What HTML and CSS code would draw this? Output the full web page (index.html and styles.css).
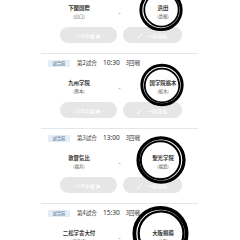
FILE: index.html
```html
<!DOCTYPE html>
<html lang="ja">
<head>
  <meta charset="utf-8">
  <title>試合一覧</title>
  <link rel="stylesheet" href="styles.css">
</head>
<body>
  <div id="lista">
    <div class="partido parcial">
      <div class="equipos">
        <div class="equipo">下関国際<small>(山口)</small></div>
        <div class="guion">-</div>
        <div class="equipo">浜田<small>(島根)</small></div>
      </div>
      <div class="acciones">
        <button>LIVE中継 ▶</button>
        <button><svg class="lapiz" viewBox="0 0 10 10"><path d="M1.5 8.5 L8 2" /><path d="M1 9 L2.2 8.8 L1.2 7.8 Z" /></svg>一球速報</button>
      </div>
      <svg class="marca m1" viewBox="0 0 60 60"><ellipse cx="30" cy="30" rx="27.5" ry="26.8" /><ellipse class="fino" cx="30.6" cy="29.6" rx="23.4" ry="23" /></svg>
    </div>

    <div class="partido">
      <div class="cabecera">
        <span class="estado">試合前</span>
        <span>第2試合</span>
        <span class="hora">10:30</span>
        <span>3回戦</span>
      </div>
      <div class="equipos">
        <div class="equipo">九州学院<small>(熊本)</small></div>
        <div class="guion">-</div>
        <div class="equipo">国学院栃木<small>(栃木)</small></div>
      </div>
      <div class="acciones">
        <button>LIVE中継 ▶</button>
        <button><svg class="lapiz" viewBox="0 0 10 10"><path d="M1.5 8.5 L8 2" /><path d="M1 9 L2.2 8.8 L1.2 7.8 Z" /></svg>一球速報</button>
      </div>
      <svg class="marca m2" viewBox="0 0 60 60"><ellipse cx="30" cy="30" rx="27.5" ry="27" /><ellipse class="fino" cx="30" cy="30.6" rx="23.5" ry="23" /></svg>
    </div>

    <div class="partido">
      <div class="cabecera">
        <span class="estado">試合前</span>
        <span>第3試合</span>
        <span class="hora">13:00</span>
        <span>3回戦</span>
      </div>
      <div class="equipos">
        <div class="equipo">敦賀気比<small>(福井)</small></div>
        <div class="guion">-</div>
        <div class="equipo">聖光学院<small>(福島)</small></div>
      </div>
      <div class="acciones">
        <button>LIVE中継 ▶</button>
        <button><svg class="lapiz" viewBox="0 0 10 10"><path d="M1.5 8.5 L8 2" /><path d="M1 9 L2.2 8.8 L1.2 7.8 Z" /></svg>一球速報</button>
      </div>
      <svg class="marca m3" viewBox="0 0 60 60"><ellipse cx="30" cy="30" rx="27.5" ry="26.6" /><ellipse class="fino" cx="29.4" cy="30.2" rx="23.6" ry="22.8" /></svg>
    </div>

    <div class="partido">
      <div class="cabecera">
        <span class="estado">試合前</span>
        <span>第4試合</span>
        <span class="hora">15:30</span>
        <span>3回戦</span>
      </div>
      <div class="equipos">
        <div class="equipo">二松学舎大付<small>(東東京)</small></div>
        <div class="guion">-</div>
        <div class="equipo">大阪桐蔭<small>(大阪)</small></div>
      </div>
      <div class="acciones">
        <button>LIVE中継 ▶</button>
        <button><svg class="lapiz" viewBox="0 0 10 10"><path d="M1.5 8.5 L8 2" /><path d="M1 9 L2.2 8.8 L1.2 7.8 Z" /></svg>一球速報</button>
      </div>
      <svg class="marca m4" viewBox="0 0 60 60"><ellipse cx="30" cy="30" rx="27.5" ry="27" /><ellipse class="fino" cx="30.6" cy="30" rx="23.6" ry="23.2" /></svg>
    </div>
  </div>
</body>
</html>
```

FILE: styles.css
```css
body {
  margin: 0;
  background: #fff;
  font-family: "Noto Sans CJK JP", "Noto Sans", sans-serif;
  color: #333;
  overflow: hidden;
}

#lista {
  width: 157px;
  margin-left: 41px;
}

.partido {
  position: relative;
  padding: 5px 0 10px;
  border-bottom: 1px solid #e4e7ea;
}

.partido.parcial {
  padding-top: 4px;
}

.cabecera {
  display: flex;
  align-items: center;
  height: 8px;
  padding-left: 7px;
  gap: 6px;
  font-size: 5.6px;
  line-height: 8px;
  color: #333;
}

.cabecera .hora {
  font-family: "Noto Sans", sans-serif;
  font-size: 6.6px;
}

.estado {
  width: 22px;
  height: 7px;
  margin-right: 1px;
  background: #e3eef7;
  color: #44627f;
  font-size: 4.2px;
  line-height: 7px;
  text-align: center;
}

.equipos {
  display: grid;
  grid-template-columns: 76px 1fr 76px;
  margin-top: 12px;
  align-items: center;
}

.parcial .equipos {
  margin-top: 0;
}

.equipo {
  text-align: center;
  font-size: 5.4px;
  line-height: 8px;
  font-weight: bold;
  color: #333;
}

.equipo:last-child {
  padding-left: 6px;
}

.equipo small {
  display: block;
  font-size: 4.3px;
  font-weight: normal;
  color: #555;
}

.guion {
  text-align: center;
  font-size: 6px;
  color: #555;
}

.acciones {
  display: flex;
  justify-content: center;
  gap: 6px;
  margin-top: 7px;
  padding-left: 2px;
}

.acciones button {
  display: flex;
  align-items: center;
  justify-content: center;
  gap: 3px;
  width: 57px;
  height: 16px;
  padding: 0;
  border: none;
  border-radius: 8px;
  background: #e6e6e6;
  color: #fff;
  font-family: "Noto Sans CJK JP", "Noto Sans", sans-serif;
  font-size: 5px;
}

.acciones button + button {
  width: 59px;
}

.lapiz {
  width: 7px;
  height: 7px;
  fill: #fff;
  stroke: #fff;
  stroke-width: 1.2;
}

.marca {
  position: absolute;
  fill: none;
  stroke: #000;
  stroke-width: 4;
}

.marca .fino {
  stroke-width: 2.4;
}

.m1 {
  left: 98px;
  top: -12px;
  width: 44px;
  height: 44px;
}

.m2 {
  left: 99px;
  top: 9px;
  width: 44px;
  height: 44px;
}

.m3 {
  left: 95px;
  top: 6px;
  width: 50px;
  height: 50px;
}

.m4 {
  left: 91px;
  top: 1px;
  width: 57px;
  height: 57px;
}
```
